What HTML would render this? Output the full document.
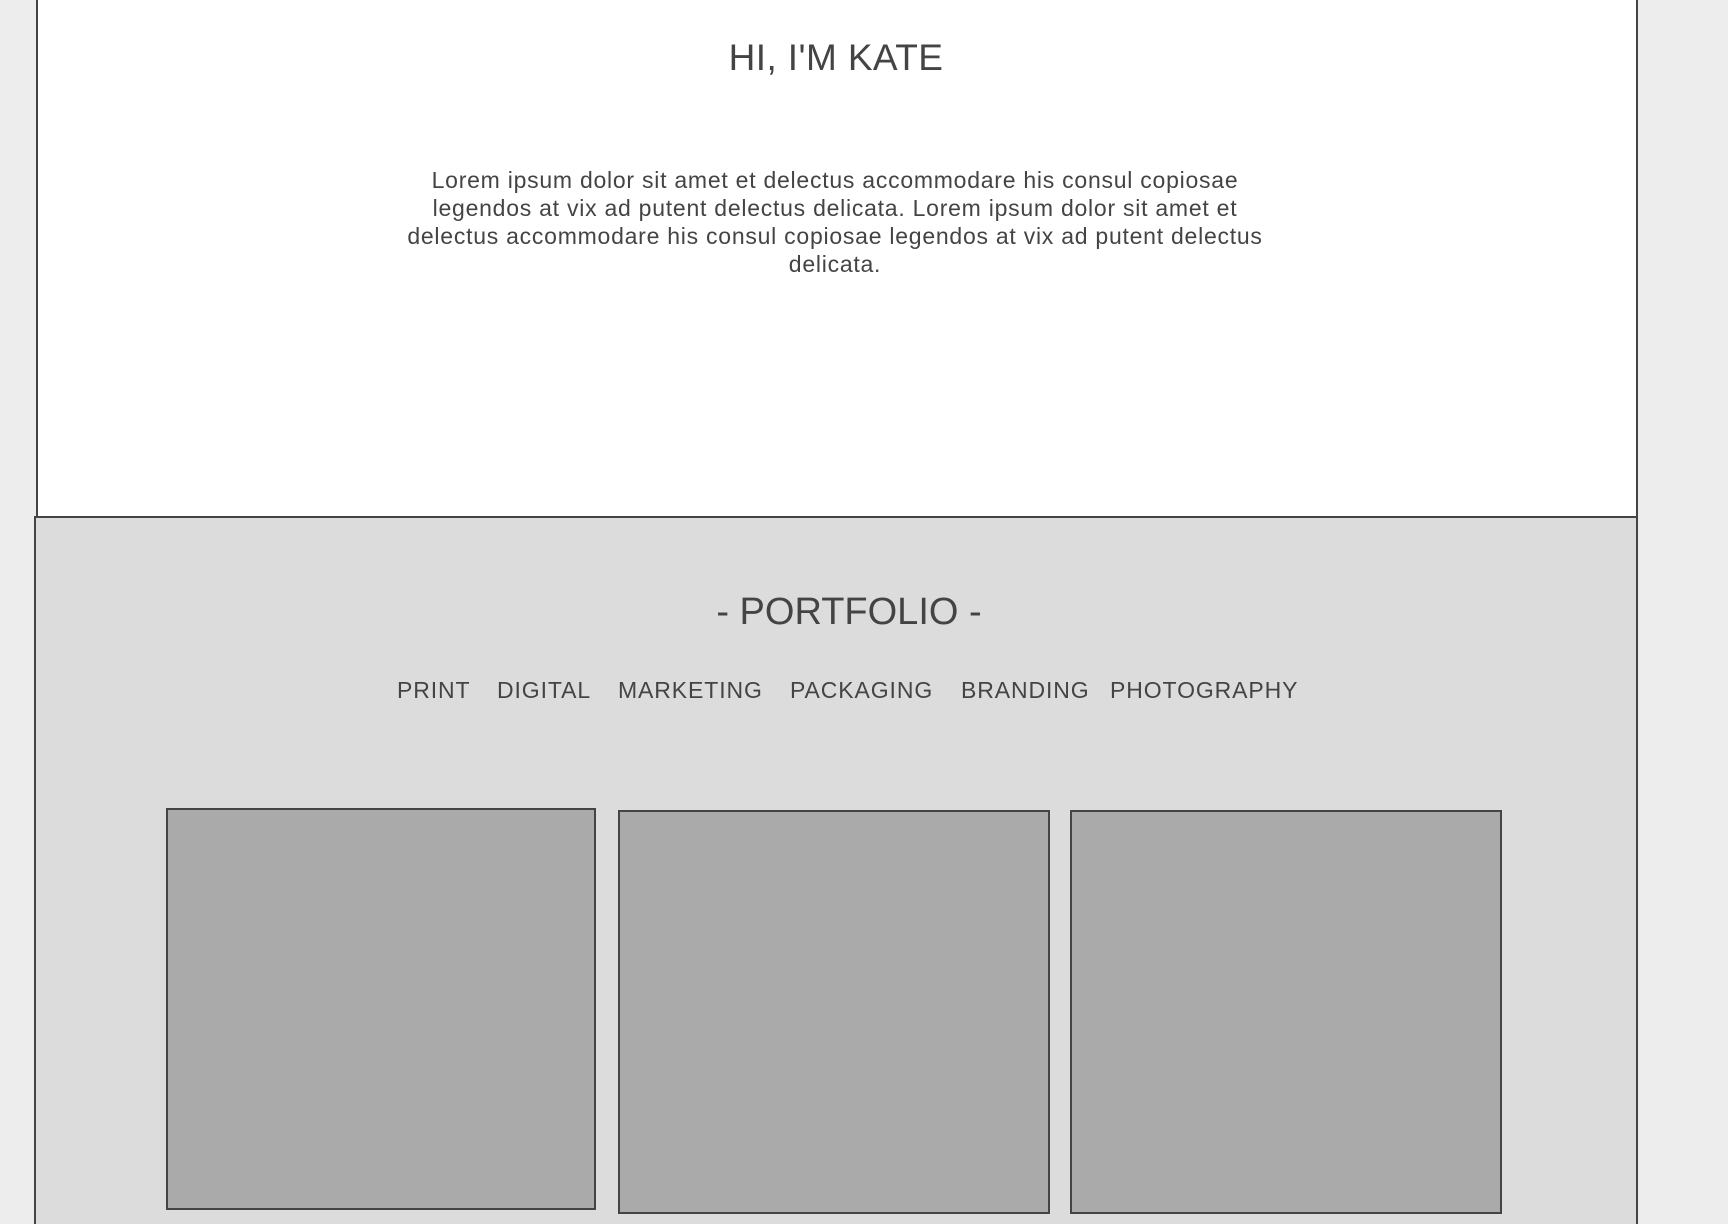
<!DOCTYPE html>
<html><head><meta charset="utf-8"><style>
*{margin:0;padding:0;box-sizing:border-box}
html,body{width:1728px;height:1224px;overflow:hidden}
body{background:#ededed;position:relative;font-family:"Liberation Sans",sans-serif;color:#444}
.white{position:absolute;left:36px;top:-2px;width:1602px;height:521px;background:#fff;border:2px solid #444;border-top:none}
.gray{position:absolute;left:34px;top:516px;width:1604px;height:708px;background:#dcdcdc;border:2px solid #444;border-bottom:none}
h1{position:absolute;left:0;width:1672px;text-align:center;top:37px;font-size:37px;font-weight:normal;letter-spacing:0.4px}
p{position:absolute;left:400px;width:870px;top:166px;text-align:center;font-size:23px;line-height:28px;letter-spacing:0.75px}
h2{position:absolute;left:0;width:1698px;text-align:center;top:591px;font-size:38px;font-weight:normal;letter-spacing:0px}
.nav span{position:absolute;top:677px;font-size:23px;letter-spacing:0.9px}
.box{position:absolute;background:#aaa;border:2px solid #444}
</style></head><body>
<div class="white"></div>
<div class="gray"></div>
<h1>HI, I'M KATE</h1>
<p>Lorem ipsum dolor sit amet et delectus accommodare his consul copiosae legendos at vix ad putent delectus delicata. Lorem ipsum dolor sit amet et delectus accommodare his consul copiosae legendos at vix ad putent delectus delicata.</p>
<h2>- PORTFOLIO -</h2>
<div class="nav">
<span style="left:397px">PRINT</span>
<span style="left:497px">DIGITAL</span>
<span style="left:618px">MARKETING</span>
<span style="left:790px">PACKAGING</span>
<span style="left:961px">BRANDING</span>
<span style="left:1110px">PHOTOGRAPHY</span>
</div>
<div class="box" style="left:166px;top:808px;width:430px;height:402px"></div>
<div class="box" style="left:618px;top:810px;width:432px;height:404px"></div>
<div class="box" style="left:1070px;top:810px;width:432px;height:404px"></div>
</body></html>
